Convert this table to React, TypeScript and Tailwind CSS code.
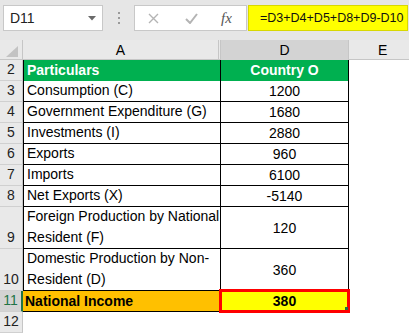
import React from "react";

const FONT = { fontFamily: '"Liberation Sans", Arial, sans-serif' };

// Column widths: row header | A | D | E
const GRID = "grid grid-cols-[23px_198px_128px_60px]";

const ROWS = [
  { n: 3, label: ["Consumption (C)"], value: "1200" },
  { n: 4, label: ["Government Expenditure (G)"], value: "1680" },
  { n: 5, label: ["Investments (I)"], value: "2880" },
  { n: 6, label: ["Exports"], value: "960" },
  { n: 7, label: ["Imports"], value: "6100" },
  { n: 8, label: ["Net Exports (X)"], value: "-5140" },
  { n: 9, label: ["Foreign Production by National", "Resident (F)"], value: "120" },
  { n: 10, label: ["Domestic Production by Non-", "Resident (D)"], value: "360" },
];

function RowHeader({ n, tall, selected }: { n: number; tall?: boolean; selected?: boolean }) {
  return (
    <div
      className={`flex items-end justify-center border-b border-[#d0d0d0] pb-[1px] text-[14px] leading-[20px] ${
        selected
          ? "bg-[#d3d3d3] text-[#217346] border-r-2 border-r-[#217346]"
          : "bg-[#e9e9e9] text-[#222] border-r border-r-[#c6c6c6]"
      } ${tall ? "h-[42px]" : "h-[21px]"}`}
    >
      {n}
    </div>
  );
}

export default function App() {
  return (
    <div className="w-[409px] h-[333px] overflow-hidden bg-white text-black" style={FONT}>
      {/* Formula bar */}
      <div className="h-[40px] bg-[#e6e6e6] flex items-start pt-[5px]">
        <div className="ml-[3px] w-[100px] h-[26px] bg-white border border-[#c8c8c8] flex items-center justify-between pl-[6px] pr-[6px]">
          <span className="text-[14px] text-[#222]">D11</span>
          <svg width="8" height="5" viewBox="0 0 8 5">
            <path d="M0 0 L8 0 L4 4.5 Z" fill="#6a6a6a" />
          </svg>
        </div>
        <div className="w-[31px] h-[26px] flex flex-col items-center justify-center gap-[3px]">
          <span className="w-[2px] h-[2px] bg-[#9a9a9a]" />
          <span className="w-[2px] h-[2px] bg-[#9a9a9a]" />
          <span className="w-[2px] h-[2px] bg-[#9a9a9a]" />
        </div>
        <div className="w-[113px] h-[26px] bg-white border border-[#c8c8c8] flex items-center">
          <svg className="ml-[13px]" width="11" height="11" viewBox="0 0 11 11">
            <path d="M1 1 L10 10 M10 1 L1 10" stroke="#b4b4b4" strokeWidth="1.4" />
          </svg>
          <svg className="ml-[26px]" width="13" height="11" viewBox="0 0 13 11">
            <path d="M1 6 L5 10 L12 1" stroke="#b4b4b4" strokeWidth="2" fill="none" />
          </svg>
          <span
            className="ml-[23px] text-[15px] italic text-[#555]"
            style={{ fontFamily: '"Liberation Serif", "Times New Roman", serif' }}
          >
            fx
          </span>
        </div>
        <div className="ml-[1px] w-[160px] h-[26px] bg-[#ffff00] border border-[#d8d800] flex items-center pl-[11px]">
          <span className="text-[12.5px] text-[#111]">=D3+D4+D5+D8+D9-D10</span>
        </div>
      </div>

      {/* Column headers */}
      <div className={`${GRID} h-[20px] bg-[#e9e9e9] text-[14px] leading-[20px] border-b border-[#c6c6c6]`}>
        <div className="relative border-r border-[#c6c6c6]">
          <svg className="absolute left-[6px] top-[6px]" width="12" height="11" viewBox="0 0 12 11">
            <path d="M12 0 L12 11 L0 11 Z" fill="#c3c3c3" />
          </svg>
        </div>
        <div className="text-center border-r-[3px] border-double border-[#c6c6c6]">A</div>
        <div className="text-center bg-[#d3d3d3] border-r border-[#c6c6c6] border-b-2 border-b-[#a8a8a8]">D</div>
        <div className="pl-[29px]">E</div>
      </div>

      {/* Row 2 */}
      <div className={`${GRID}`}>
        <RowHeader n={2} />
        <div className="h-[21px] bg-[#00b050] text-white font-bold text-[14px] leading-[21px] pl-[3px] border-l border-black border-r border-r-black">
          Particulars
        </div>
        <div className="h-[21px] bg-[#00b050] text-white font-bold text-[14px] leading-[21px] text-center border-r border-black">
          Country O
        </div>
        <div />
      </div>

      {ROWS.map((r) => {
        const tall = r.label.length > 1;
        return (
          <div key={r.n} className={GRID}>
            <RowHeader n={r.n} tall={tall} />
            <div
              className={`flex flex-col justify-end border-l border-r border-b border-black pl-[3px] text-[14px] leading-[21px] whitespace-nowrap ${
                tall ? "h-[42px]" : "h-[21px] pt-[1px]"
              }`}
            >
              {r.label.map((l) => (
                <span key={l}>{l}</span>
              ))}
            </div>
            <div
              className={`flex items-center justify-center border-r border-b border-black text-[14px] pt-[1px] ${
                tall ? "h-[42px]" : "h-[21px]"
              }`}
            >
              {r.value}
            </div>
            <div />
          </div>
        );
      })}

      {/* Row 11 */}
      <div className={GRID}>
        <RowHeader n={11} selected />
        <div className="h-[21px] bg-[#ffc000] font-bold text-[14px] leading-[21px] pl-[2px] border-r border-b border-black">
          National Income
        </div>
        <div className="relative h-[21px] bg-[#ffff00] font-bold text-[14px] leading-[21px] text-center border-r border-b border-black">
          380
          <div className="absolute -left-[2px] -top-[2px] -right-[2px] -bottom-[2px] border-[3px] border-[#ff0000]" />
          <div className="absolute right-[0px] bottom-[1px] w-[3px] h-[3px] bg-[#217346]" />
        </div>
        <div />
      </div>

      {/* Row 12 */}
      <div className={GRID}>
        <RowHeader n={12} />
        <div />
        <div />
        <div />
      </div>
    </div>
  );
}
